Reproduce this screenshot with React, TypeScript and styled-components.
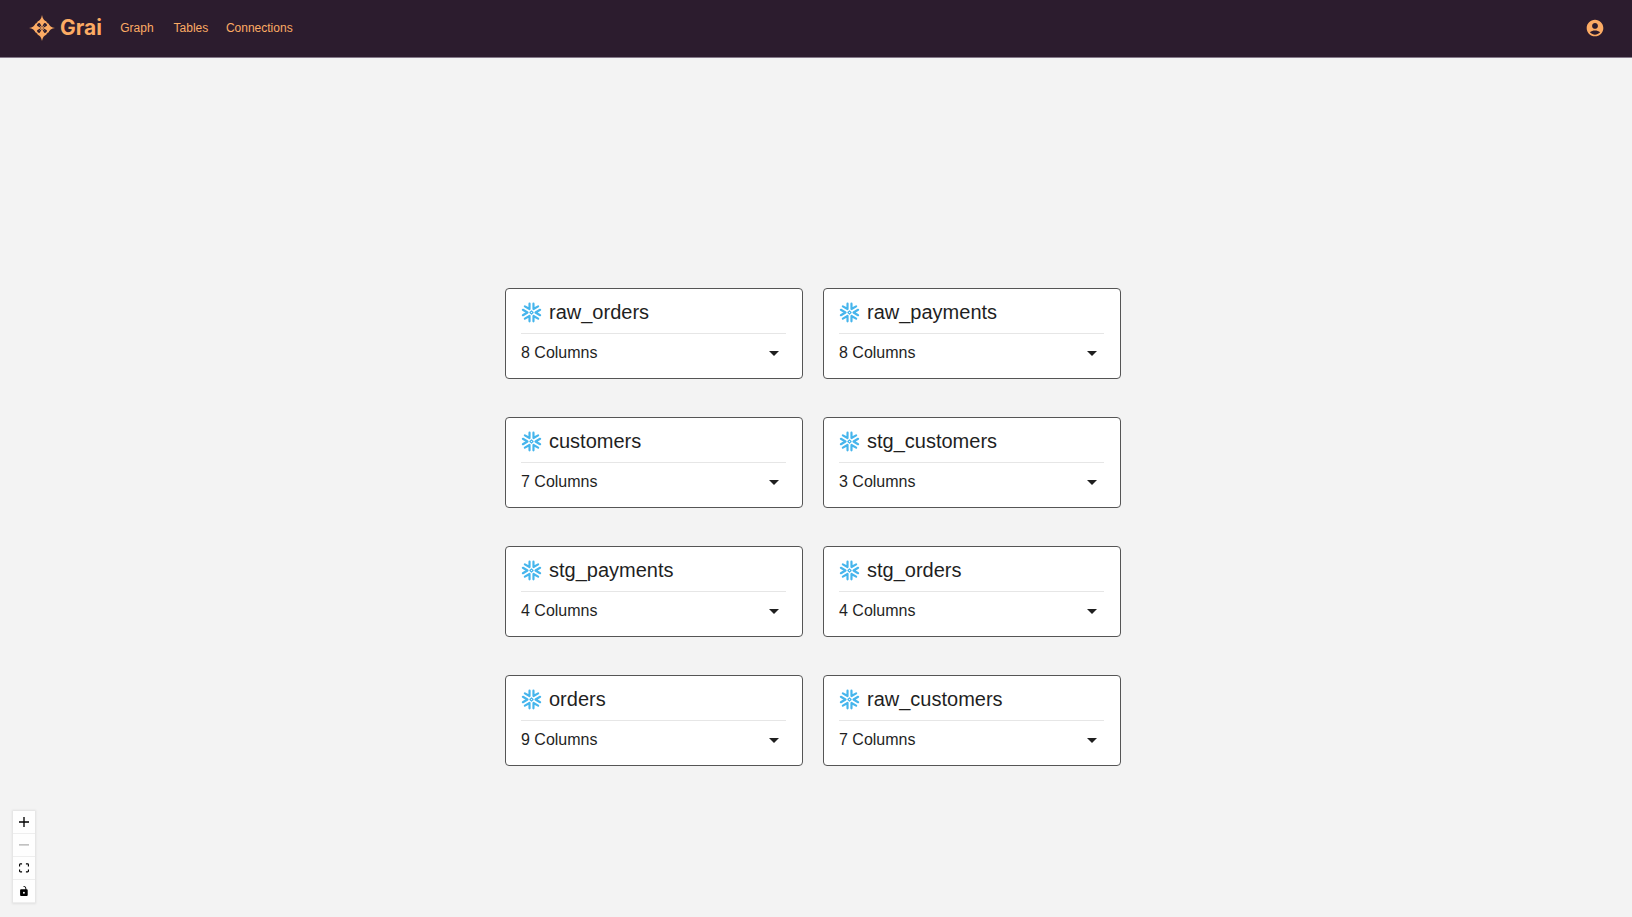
import React from "react";
import styled, { createGlobalStyle } from "styled-components";
import { MdArrowDropDown } from "react-icons/md";

const GlobalStyle = createGlobalStyle`
  *, *::before, *::after { box-sizing: border-box; }
  body {
    margin: 0;
    background: #f3f3f3;
    color: #1f1f1f;
    font-family: "Liberation Sans", Arial, sans-serif;
  }
`;

const Page = styled.div`
  display: flex;
  flex-direction: column;
  min-height: 100vh;
`;

const Header = styled.header`
  display: flex;
  align-items: center;
  height: 58px;
  padding: 0 27px 2px 29px;
  background: #2c1c2e;
  border-bottom: 1px solid #85798a;
  color: #fcab64;
`;

const Brand = styled.a`
  display: flex;
  align-items: center;
  gap: 5px;
  margin-right: 8px;
  color: inherit;
  text-decoration: none;
  font-family: Inter, "Liberation Sans", sans-serif;
  font-size: 21px;
  line-height: 26px;
  font-weight: 700;
`;

const Nav = styled.nav`
  display: flex;
  flex: 1;
`;

const NavLink = styled.a`
  min-width: 54px;
  padding: 6px 8px;
  color: inherit;
  font-size: 12px;
  line-height: 18px;
  text-align: center;
  text-decoration: none;
`;

const IconButton = styled.button`
  display: flex;
  padding: 0;
  border: 0;
  background: none;
  color: inherit;
  cursor: pointer;
`;

const Canvas = styled.main`
  position: relative;
  flex: 1;
  padding: 230px 22px 100px 16px;
`;

const NodeGrid = styled.div`
  display: grid;
  grid-template-columns: repeat(2, 298px);
  gap: 38px 20px;
  justify-content: center;
`;

const Card = styled.article`
  padding: 8px 16px 6px 15px;
  background: #fff;
  border: 1px solid #555;
  border-radius: 4px;
`;

const CardTitle = styled.h2`
  display: flex;
  align-items: center;
  gap: 7px;
  height: 37px;
  margin: 0;
  padding-bottom: 6px;
  border-bottom: 1px solid #e6e6e6;
  font-size: 20px;
  line-height: 30px;
  font-weight: 400;

  svg { color: #46b5ec; }
`;

const ColumnsToggle = styled.button`
  display: flex;
  align-items: center;
  justify-content: space-between;
  width: 100%;
  height: 38px;
  padding: 0;
  border: 0;
  background: none;
  color: inherit;
  font: inherit;
  font-size: 16px;
  line-height: 24px;
  cursor: pointer;
`;

const Controls = styled.div`
  position: absolute;
  left: 13px;
  bottom: 14px;
  display: flex;
  flex-direction: column;
  box-shadow: 0 0 2px 1px rgba(0, 0, 0, 0.08);
`;

const ControlButton = styled.button`
  display: flex;
  align-items: center;
  justify-content: center;
  width: 22px;
  height: 23px;
  padding: 0;
  border: 0;
  border-bottom: 1px solid #eee;
  background: #fefefe;
  color: #000;
  cursor: pointer;

  &:disabled { color: #b0b0b0; }
`;

const Logo = () => (
  <svg width="26" height="26" viewBox="0 0 26 26" fill="currentColor" aria-hidden="true">
    <circle cx="13" cy="13" r="6.8" fill="none" stroke="currentColor" strokeWidth="1.6" />
    {[0, 90, 180, 270].map((angle) => (
      <g key={angle} transform={`rotate(${angle} 13 13)`}>
        <path d="M13 0C13.6 3.6 15 5.6 17.8 6.6C15.2 7.8 13.8 9.4 13.2 13H12.8C12.2 9.4 10.8 7.8 8.2 6.6C11 5.6 12.4 3.6 13 0Z" />
        <path d="M13 13L15.4 10.6" stroke="currentColor" strokeWidth="0.7" />
      </g>
    ))}
  </svg>
);

const SnowflakeIcon = () => (
  <svg
    width="21"
    height="21"
    viewBox="0 0 21 21"
    fill="none"
    stroke="currentColor"
    strokeLinecap="round"
    strokeLinejoin="round"
    aria-hidden="true"
  >
    <path d="M10.5 8.9L12.1 10.5L10.5 12.1L8.9 10.5Z" strokeWidth="1.2" />
    {[0, 60, 120, 180, 240, 300].map((angle) => (
      <path
        key={angle}
        d="M19.1 7.8L14.5 10.5L19.1 13.2"
        strokeWidth="2.2"
        transform={`rotate(${angle} 10.5 10.5)`}
      />
    ))}
  </svg>
);

const AccountIcon = () => (
  <svg width="20" height="20" viewBox="0 0 24 24" fill="currentColor" aria-hidden="true">
    <path d="M12 2C6.48 2 2 6.48 2 12s4.48 10 10 10 10-4.48 10-10S17.52 2 12 2zm0 4c1.93 0 3.5 1.57 3.5 3.5S13.93 13 12 13s-3.5-1.57-3.5-3.5S10.07 6 12 6zm0 14c-2.03 0-4.43-.82-6.14-2.88C7.55 15.8 9.68 15 12 15s4.45.8 6.14 2.12C16.43 19.18 14.03 20 12 20z" />
  </svg>
);

const links = ["Graph", "Tables", "Connections"];

const tables = [
  { name: "raw_orders", columns: 8 },
  { name: "raw_payments", columns: 8 },
  { name: "customers", columns: 7 },
  { name: "stg_customers", columns: 3 },
  { name: "stg_payments", columns: 4 },
  { name: "stg_orders", columns: 4 },
  { name: "orders", columns: 9 },
  { name: "raw_customers", columns: 7 },
];

const controls = [
  {
    label: "Zoom in",
    viewBox: "0 0 32 32",
    path: "M32 18.133H18.133V32h-4.266V18.133H0v-4.266h13.867V0h4.266v13.867H32z",
  },
  { label: "Zoom out", viewBox: "0 0 32 5", path: "M0 0h32v4.2H0z", disabled: true },
  {
    label: "Fit view",
    viewBox: "0 0 32 30",
    path: "M3.692 4.63c0-.53.4-.938.939-.938h5.215V0H4.708C2.13 0 0 2.054 0 4.63v5.216h3.692V4.631zM27.354 0h-5.2v3.692h5.17c.53 0 .984.4.984.939v5.215H32V4.631A4.624 4.624 0 0027.354 0zm.954 24.83c0 .532-.4.94-.939.94h-5.215v3.768h5.215c2.577 0 4.631-2.13 4.631-4.707v-5.139h-3.692v5.139zm-23.677.94c-.531 0-.939-.4-.939-.94v-5.138H0v5.139c0 2.577 2.13 4.707 4.708 4.707h5.138V25.77H4.631z",
  },
  {
    label: "Toggle interactivity",
    viewBox: "0 0 25 32",
    path: "M21.333 10.667H19.81V7.619C19.81 3.429 16.38 0 12.19 0c-4.114 1.828-1.37 2.133.305 2.438 1.676.305 4.42 2.59 4.42 5.181v3.048H3.047A3.056 3.056 0 000 13.714v15.238A3.056 3.056 0 003.048 32h18.285a3.056 3.056 0 003.048-3.048V13.714a3.056 3.056 0 00-3.047-3.047zM12.19 24.533a3.056 3.056 0 01-3.047-3.047 3.056 3.056 0 013.047-3.048 3.056 3.056 0 013.048 3.048 3.056 3.056 0 01-3.048 3.047z",
  },
];

export default function App() {
  return (
    <Page>
      <GlobalStyle />
      <Header>
        <Brand href="#">
          <Logo />
          Grai
        </Brand>
        <Nav>
          {links.map((link) => (
            <NavLink key={link} href={`#${link.toLowerCase()}`}>
              {link}
            </NavLink>
          ))}
        </Nav>
        <IconButton type="button" aria-label="Account">
          <AccountIcon />
        </IconButton>
      </Header>
      <Canvas>
        <NodeGrid>
          {tables.map((table) => (
            <Card key={table.name}>
              <CardTitle>
                <SnowflakeIcon />
                {table.name}
              </CardTitle>
              <ColumnsToggle type="button" aria-expanded="false">
                {table.columns} Columns
                <MdArrowDropDown size={24} aria-hidden="true" />
              </ColumnsToggle>
            </Card>
          ))}
        </NodeGrid>
        <Controls>
          {controls.map((control) => (
            <ControlButton
              key={control.label}
              type="button"
              aria-label={control.label}
              disabled={control.disabled}
            >
              <svg width="10" height="10" viewBox={control.viewBox} fill="currentColor" aria-hidden="true">
                <path d={control.path} />
              </svg>
            </ControlButton>
          ))}
        </Controls>
      </Canvas>
    </Page>
  );
}
